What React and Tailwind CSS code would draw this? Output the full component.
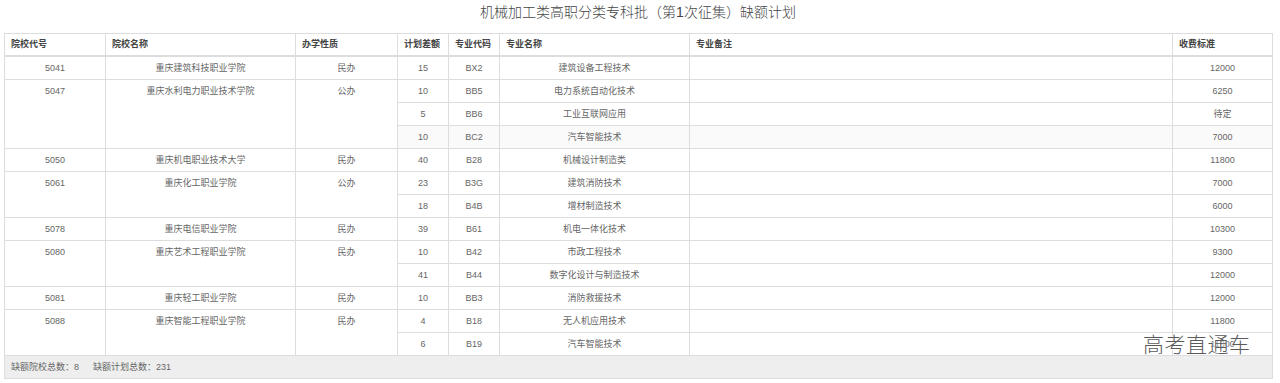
import React from 'react';

const schools = [
  {
    code: '5041', name: '重庆建筑科技职业学院', kind: '民办',
    majors: [{ n: '15', c: 'BX2', m: '建筑设备工程技术', fee: '12000' }],
  },
  {
    code: '5047', name: '重庆水利电力职业技术学院', kind: '公办',
    majors: [
      { n: '10', c: 'BB5', m: '电力系统自动化技术', fee: '6250' },
      { n: '5', c: 'BB6', m: '工业互联网应用', fee: '待定' },
      { n: '10', c: 'BC2', m: '汽车智能技术', fee: '7000', soft: true },
    ],
  },
  {
    code: '5050', name: '重庆机电职业技术大学', kind: '民办',
    majors: [{ n: '40', c: 'B28', m: '机械设计制造类', fee: '11800' }],
  },
  {
    code: '5061', name: '重庆化工职业学院', kind: '公办',
    majors: [
      { n: '23', c: 'B3G', m: '建筑消防技术', fee: '7000' },
      { n: '18', c: 'B4B', m: '增材制造技术', fee: '6000' },
    ],
  },
  {
    code: '5078', name: '重庆电信职业学院', kind: '民办',
    majors: [{ n: '39', c: 'B61', m: '机电一体化技术', fee: '10300' }],
  },
  {
    code: '5080', name: '重庆艺术工程职业学院', kind: '民办',
    majors: [
      { n: '10', c: 'B42', m: '市政工程技术', fee: '9300' },
      { n: '41', c: 'B44', m: '数字化设计与制造技术', fee: '12000' },
    ],
  },
  {
    code: '5081', name: '重庆轻工职业学院', kind: '民办',
    majors: [{ n: '10', c: 'BB3', m: '消防救援技术', fee: '12000' }],
  },
  {
    code: '5088', name: '重庆智能工程职业学院', kind: '民办',
    majors: [
      { n: '4', c: 'B18', m: '无人机应用技术', fee: '11800' },
      { n: '6', c: 'B19', m: '汽车智能技术', fee: '11800' },
    ],
  },
];

const headers = ['院校代号', '院校名称', '办学性质', '计划差额', '专业代码', '专业名称', '专业备注', '收费标准'];
const widths = [101, 190, 102, 51, 51, 190, 483, 100];

const td = 'border border-[#dddddd] h-[23px] p-0 leading-[22px] text-center align-top';

export default function App() {
  return (
    <div
      className="relative w-[1280px] h-[383px] bg-white overflow-hidden text-[#666]"
      style={{ fontFamily: '"Liberation Sans", "Noto Sans CJK SC", sans-serif' }}
    >
      <div className="ml-[4px] w-[1268px]">
        <h1 className="h-[33px] pt-[3px] text-center text-[14px] leading-[18px] text-[#444] font-light">
          机械加工类高职分类专科批（第1次征集）缺额计划
        </h1>

        <table className="w-[1268px] table-fixed border-collapse text-[9px]">
          <colgroup>
            {widths.map((w, i) => (
              <col key={i} style={{ width: w }} />
            ))}
          </colgroup>
          <thead>
            <tr>
              {headers.map((h) => (
                <th
                  key={h}
                  className="border border-[#dddddd] border-b-2 h-[22px] px-[6px] py-0 text-left font-bold text-[#444] align-middle"
                >
                  {h}
                </th>
              ))}
            </tr>
          </thead>
          <tbody>
            {schools.map((s) =>
              s.majors.map((m, i) => (
                <tr key={s.code + m.c} className={m.soft ? 'bg-[#fafafa]' : ''}>
                  {i === 0 && (
                    <>
                      <td rowSpan={s.majors.length} className={td + ' bg-white'}>{s.code}</td>
                      <td rowSpan={s.majors.length} className={td + ' bg-white'}>{s.name}</td>
                      <td rowSpan={s.majors.length} className={td + ' bg-white'}>{s.kind}</td>
                    </>
                  )}
                  <td className={td}>{m.n}</td>
                  <td className={td}>{m.c}</td>
                  <td className={td}>{m.m}</td>
                  <td className={td}></td>
                  <td className={td}>{m.fee}</td>
                </tr>
              ))
            )}
          </tbody>
          <tfoot>
            <tr>
              <td colSpan={8} className="border border-[#dddddd] bg-[#eeeeee] h-[23px] px-[6px] py-0 leading-[22px] text-left">
                <span>缺额院校总数：8</span>
                <span className="ml-[14px]">缺额计划总数：231</span>
              </td>
            </tr>
          </tfoot>
        </table>
      </div>

      <div
        className="absolute left-[1143px] top-[329px] text-[21px] leading-[28px] tracking-[0.5px] text-[#5a5a5a]"
        style={{ fontFamily: '"Noto Sans CJK SC", sans-serif', fontWeight: 300, textShadow: '0 0 2px #fff, 0 0 2px #fff' }}
      >
        高考直通车
      </div>
    </div>
  );
}
